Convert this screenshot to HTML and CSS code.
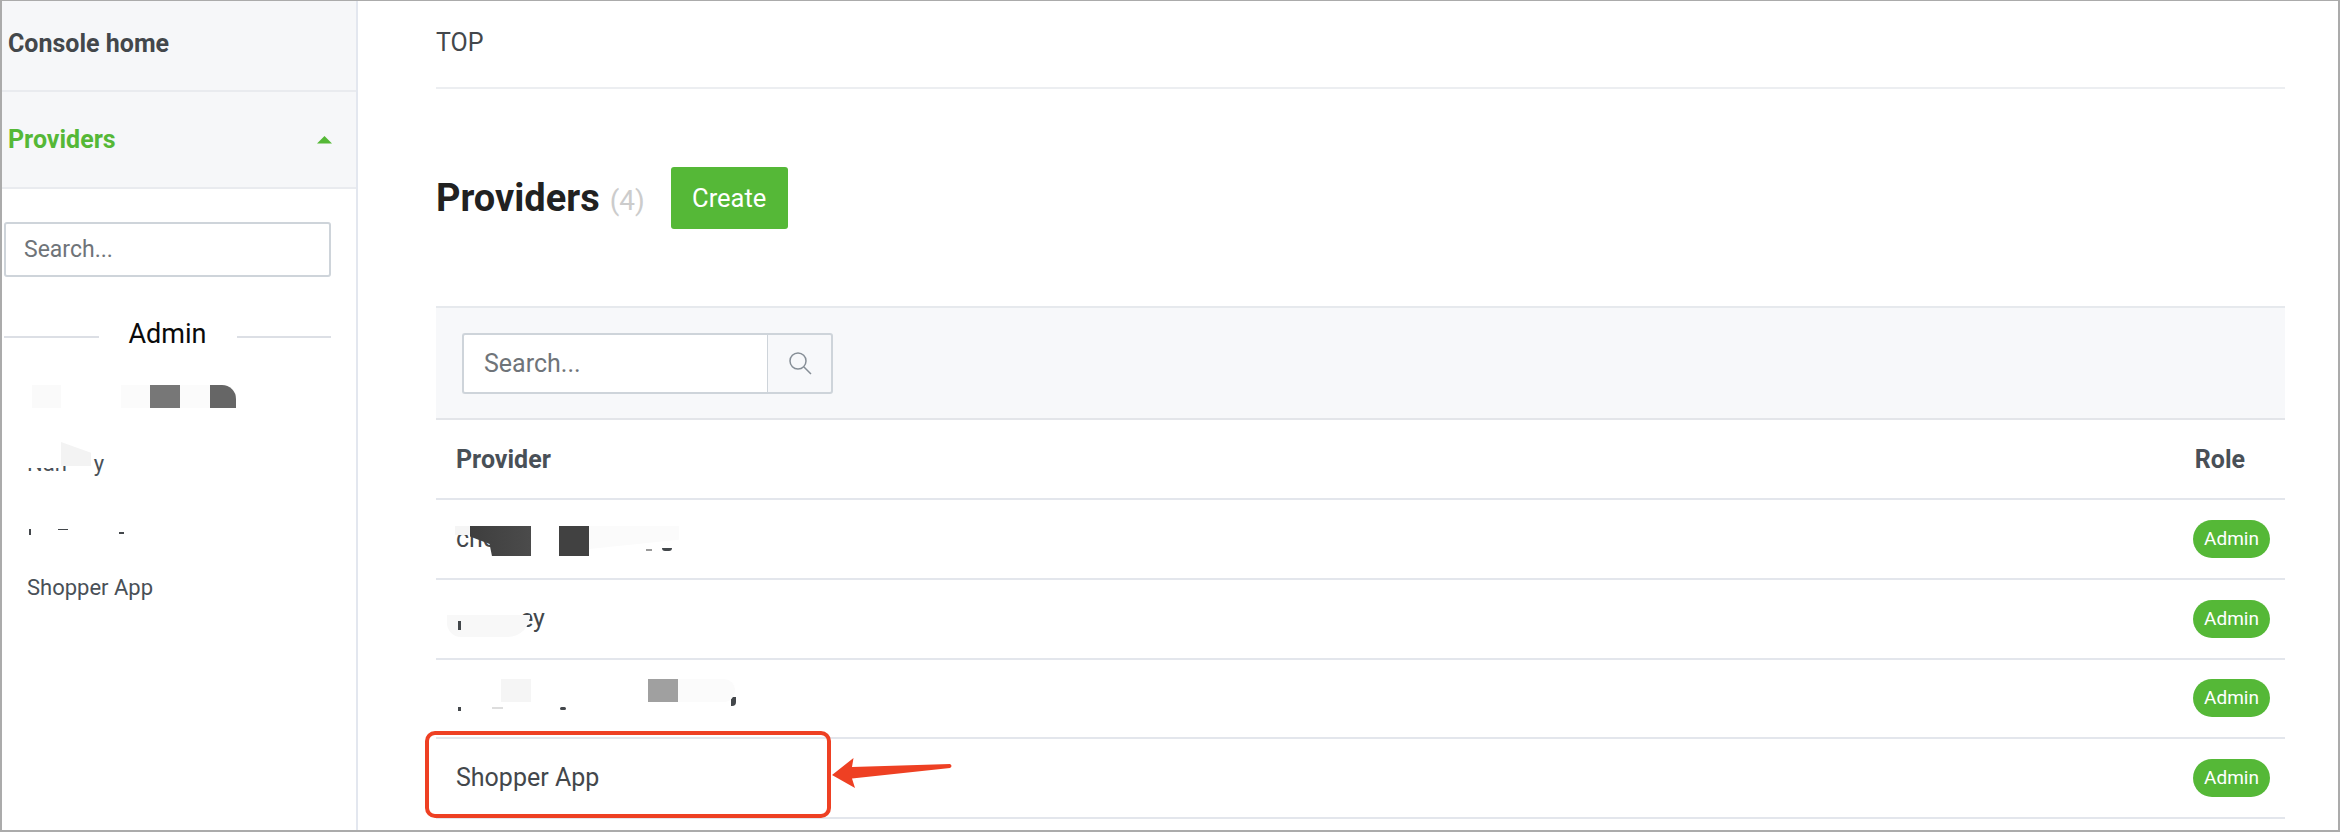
FILE: index.html
```html
<!DOCTYPE html>
<html lang="en">
<head>
<meta charset="utf-8">
<title>Providers</title>
<link rel="stylesheet" href="styles.css">
</head>
<body>
<div class="frame">
  <aside class="sidebar">
    <a class="nav-row home">Console home</a>
    <a class="nav-row active"><span>Providers</span><svg class="caret" width="15" height="8" viewBox="0 0 15 8"><path d="M0 7.5 L7.5 0 L15 7.5 Z" fill="#55b837"/></svg></a>
    <div class="side-search"><div class="input side-input">Search...</div></div>
    <div class="divider"><span>Admin</span></div>
    <ul class="side-list">
      <li class="redacted"><span class="mask m1"></span><span class="mask m2"></span><span class="mask m3"></span><span class="mask m2b"></span><span class="mask m4"></span></li>
      <li class="redacted">Nan<span class="gap g1"></span>y<span class="mask m6"></span><span class="mask m5"></span></li>
      <li class="redacted low"><span class="frag f1"></span><span class="frag f2"></span><span class="frag f3"></span></li>
      <li class="last">Shopper App</li>
    </ul>
  </aside>
  <main class="main">
    <div class="crumb">TOP</div>
    <div class="title-row">
      <h1>Providers</h1>
      <span class="count">(4)</span>
      <button class="create">Create</button>
    </div>
    <div class="toolbar">
      <div class="search-group">
        <div class="input group-input">Search...</div>
        <div class="search-btn">
          <svg width="24" height="24" viewBox="0 0 24 24" fill="none" stroke="#868e96" stroke-width="1.5"><circle cx="10" cy="10" r="8"/><path d="M16 16 L23 23"/></svg>
        </div>
      </div>
    </div>
    <table class="grid">
      <thead>
        <tr><th>Provider</th><th class="role">Role</th></tr>
      </thead>
      <tbody>
        <tr>
          <td><div class="cell">che<span class="mask r0"></span><span class="mask r1"></span><span class="mask r2"></span><span class="mask r3"></span><span class="frag f8"></span><span class="frag f9"></span></div></td>
          <td class="role"><span class="pill">Admin</span></td>
        </tr>
        <tr>
          <td><div class="cell"><span class="tail t1">ey</span><span class="mask r4"></span><span class="frag f4"></span></div></td>
          <td class="role"><span class="pill">Admin</span></td>
        </tr>
        <tr>
          <td><div class="cell"><span class="frag f5"></span><span class="frag f6"></span><span class="frag f7"></span><span class="frag f10"></span><span class="mask r5"></span><span class="mask r6"></span><span class="mask r7"></span></div></td>
          <td class="role"><span class="pill">Admin</span></td>
        </tr>
        <tr>
          <td><div class="cell">Shopper App</div></td>
          <td class="role"><span class="pill">Admin</span></td>
        </tr>
      </tbody>
    </table>
  </main>
  <svg class="callout" width="540" height="95" viewBox="0 0 540 95" fill="none">
    <rect x="2" y="2" width="402" height="83" rx="8" stroke="#ee4023" stroke-width="4"/>
    <path d="M407 44 L428.5 27 L427 36 L525 33 Q528 35 525 37 L427 47.5 L430 57 Z" fill="#ee4023"/>
  </svg>
</div>
</body>
</html>
```
FILE: styles.css
```css
* { box-sizing: border-box; }
html, body { margin: 0; padding: 0; background: #fff; }
body { font-family: Roboto, "Noto Sans", sans-serif; color: #495057; }

.frame {
  position: relative;
  display: flex;
  width: 2340px;
  height: 832px;
  overflow: hidden;
  border: 2px solid #ababab;
  border-top-width: 1px;
  background: #fff;
}

/* sidebar */
.sidebar {
  flex: 0 0 356px;
  border-right: 2px solid #e3e7ef;
}
.nav-row {
  display: flex;
  align-items: center;
  justify-content: space-between;
  padding: 0 24px 0 6px;
  background: #f6f7f9;
  font-size: 25px;
  font-weight: 700;
  border-bottom: 2px solid #e9ebef;
}
.home { height: 91px; padding-bottom: 5px; color: #43474b; }
.active { height: 97px; color: #55b837; }
.caret { margin-top: 0; }
.side-search { padding: 33px 25px 0 2px; }
.input {
  display: flex;
  align-items: center;
  background: #fff;
  border: 2px solid #ced4da;
  border-radius: 3px;
  color: #6f7479;
  font-size: 23px;
  padding-left: 18px;
}
.side-input { height: 55px; }
.divider {
  display: flex;
  align-items: center;
  justify-content: center;
  margin: 39px 25px 0 2px;
  height: 36px;
  font-size: 27px;
  color: #0a0a0a;
  gap: 30px;
}
.divider::before, .divider::after {
  content: "";
  flex: 1;
  height: 2px;
  margin-top: 6px;
  background: #dcdfe5;
}
.side-list {
  list-style: none;
  margin: 0;
  padding: 19px 0 0 25px;
  font-size: 22px;
  line-height: 26px;
  color: #495057;
}
.side-list li { position: relative; height: 62px; padding-top: 18px; }
.mask { position: absolute; display: block; }
.m1 { left: 5px; top: 14px; width: 29px; height: 23px; background: #fafafa; }
.m2 { left: 94px; top: 14px; width: 29px; height: 23px; background: #fbfbfb; }
.m3 { left: 123px; top: 14px; width: 30px; height: 23px; background: #777; }
.m2b { left: 153px; top: 14px; width: 30px; height: 23px; background: #fbfbfb; }
.m4 { left: 183px; top: 14px; width: 26px; height: 23px; background: #666; border-radius: 0 14px 0 0; }
.m5 { left: 34px; top: 9px; width: 30px; height: 24px; background: #f3f3f3; clip-path: polygon(0 0, 100% 45%, 100% 100%, 0 100%); }
.m6 { left: -2px; top: 8px; width: 36px; height: 27px; background: #fff; }

/* main */
.main {
  flex: 1;
  min-width: 0;
  padding: 0 53px 0 78px;
}
.crumb {
  height: 88px;
  padding-top: 27px;
  font-size: 25px;
  line-height: 30px;
  color: #43474b;
  border-bottom: 2px solid #eceef1;
}
.title-row {
  display: flex;
  align-items: center;
  height: 217px;
}
h1 {
  margin: 0;
  font-size: 38px;
  font-weight: 700;
  color: #212121;
}
.count {
  margin: 6px 0 0 10px;
  font-size: 28px;
  color: #ccc;
}
.create {
  margin-left: 26px;
  width: 117px;
  height: 62px;
  border: 0;
  border-radius: 3px;
  background: #55b837;
  color: #fff;
  font: 400 25.5px Roboto, sans-serif;
}
.toolbar {
  display: flex;
  align-items: center;
  height: 114px;
  padding-left: 26px;
  background: #f7f8fa;
  border-top: 2px solid #e6e9ed;
  border-bottom: 2px solid #e3e5e9;
}
.search-group { display: flex; }
.group-input {
  width: 306px;
  height: 61px;
  border-right: 0;
  border-radius: 3px 0 0 3px;
  padding-left: 20px;
  font-size: 25px;
}
.search-btn {
  display: flex;
  align-items: center;
  justify-content: center;
  width: 66px;
  height: 61px;
  margin-left: -1px;
  border: 2px solid #ced4da;
  border-left-width: 1px;
  border-radius: 0 3px 3px 0;
}
.grid { width: 100%; border-collapse: collapse; }
.grid th, .grid td {
  padding: 0 20px;
  text-align: left;
  border-bottom: 2px solid #e3e6ec;
}
.grid th { height: 79px; font-size: 25px; font-weight: 700; color: #495057; }
.grid td { height: 79.8px; font-size: 25px; color: #43474b; }
.grid th.role, .grid td.role { width: 100px; text-align: right; padding: 0 15px 0 0; }
.grid th.role { padding-right: 40px; }
.grid td.role { padding-right: 15px; }
.cell { position: relative; height: 30px; line-height: 30px; }
.pill {
  display: inline-block;
  width: 77px;
  height: 38px;
  border-radius: 19px;
  background: #55b837;
  color: #fff;
  font-size: 19px;
  line-height: 38px;
  text-align: center;
}
.r0 { left: -1px; top: 2px; width: 15px; height: 9px; background: #f5f5f5; }
.r1 { left: 14px; top: 2px; width: 61px; height: 30px; background: linear-gradient(90deg,#3e3e3e,#4b4b4b); clip-path: polygon(0 0, 100% 0, 100% 100%, 36% 100%, 32% 60%, 0 35%); }
.r2 { left: 103px; top: 2px; width: 30px; height: 30px; background: #414141; }
.r3 { left: 133px; top: 2px; width: 90px; height: 23px; background: #fbfbfb; clip-path: polygon(0 0, 100% 0, 100% 60%, 0 100%); }
.tail { position: absolute; left: 64px; top: 0; }
.r4 { left: -9px; top: 11px; width: 83px; height: 22px; background: #f8f8f8; border-radius: 0 0 22px 14px; }
.r5 { left: 45px; top: -4px; width: 30px; height: 23px; background: #f5f5f5; }
.r6 { left: 192px; top: -4px; width: 30px; height: 23px; background: #a0a0a0; }
.r7 { left: 222px; top: -4px; width: 57px; height: 23px; background: #fbfbfb; border-radius: 0 14px 14px 0; }

.frag { position: absolute; display: block; background: #43474b; }
.f4 { left: 2px; top: 17px; width: 3px; height: 9px; }
.f5 { left: 2px; top: 24px; width: 3px; height: 4px; }
.f6 { left: 36px; top: 24px; width: 11px; height: 2px; background: #ddd; }
.f7 { left: 104px; top: 24px; width: 6px; height: 3px; border-radius: 2px; }
.f8 { left: 206px; top: 24px; width: 10px; height: 3px; border-radius: 0 0 4px 4px; }
.f9 { left: 190px; top: 25px; width: 6px; height: 2px; background: #999; }
.f10 { left: 275px; top: 14px; width: 5px; height: 9px; border-radius: 0 0 4px 0; }
.f1 { left: 2px; top: 34px; width: 2px; height: 6px; }
.f2 { left: 31px; top: 34px; width: 10px; height: 1px; }
.f3 { left: 92px; top: 37px; width: 5px; height: 2px; }
.gap { display: inline-block; }
.g1 { width: 27px; }

/* annotation drawn over the page */
.callout { position: absolute; left: 423px; top: 730px; }
```
